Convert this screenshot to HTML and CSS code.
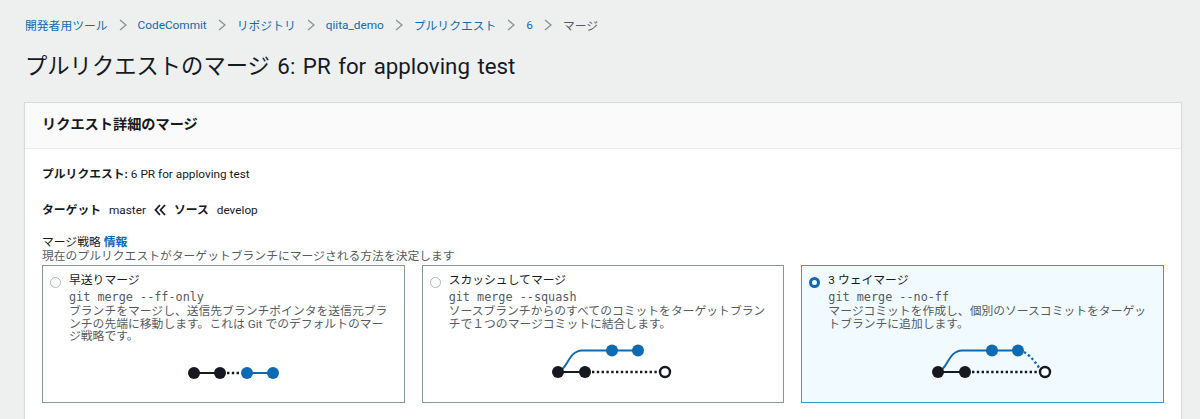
FILE: index.html
```html
<!DOCTYPE html>
<html lang="ja">
<head>
  <meta charset="UTF-8" />
  <meta name="viewport" content="width=device-width, initial-scale=1.0"/>
  <title>プルリクエストのマージ</title>
  <link rel="stylesheet" href="styles.css">
</head>
<body>

<nav class="breadcrumb">
  <a href="#">開発者用ツール</a>
  <svg class="chevron" viewBox="0 0 8 12"><path d="M1 1l6 5-6 5"/></svg>
  <a href="#">CodeCommit</a>
  <svg class="chevron" viewBox="0 0 8 12"><path d="M1 1l6 5-6 5"/></svg>
  <a href="#">リポジトリ</a>
  <svg class="chevron" viewBox="0 0 8 12"><path d="M1 1l6 5-6 5"/></svg>
  <a href="#">qiita_demo</a>
  <svg class="chevron" viewBox="0 0 8 12"><path d="M1 1l6 5-6 5"/></svg>
  <a href="#">プルリクエスト</a>
  <svg class="chevron" viewBox="0 0 8 12"><path d="M1 1l6 5-6 5"/></svg>
  <a href="#">6</a>
  <svg class="chevron" viewBox="0 0 8 12"><path d="M1 1l6 5-6 5"/></svg>
  <span>マージ</span>
</nav>

<h1 class="page-title">プルリクエストのマージ 6: PR for apploving test</h1>

<section class="panel">
  <h2 class="panel-header">リクエスト詳細のマージ</h2>
  <div class="panel-body">
    <p class="pr-line"><strong>プルリクエスト:</strong> 6 PR for apploving test</p>

    <p class="branch-line">
      <strong>ターゲット</strong>
      <span>master</span>
      <svg class="arrows" viewBox="0 0 12 12"><path d="M6 1L1.500 6 6 11M11 1L6.500 6 11 11"/></svg>
      <strong>ソース</strong>
      <span>develop</span>
    </p>

    <div class="strategy-label">マージ戦略 <a href="#">情報</a></div>
    <div class="strategy-desc">現在のプルリクエストがターゲットブランチにマージされる方法を決定します</div>

    <div class="cards">
      <div class="card">
        <span class="radio"></span>
        <div class="card-content">
          <div class="card-title">早送りマージ</div>
          <code>git merge --ff-only</code>
          <p>ブランチをマージし、送信先ブランチポインタを送信元ブランチの先端に移動します。これは Git でのデフォルトのマージ戦略です。</p>
          <svg class="graph" viewBox="0 0 130 48">
            <path class="line-black" d="M26 23H52"/>
            <path class="dots-black" d="M59 23H73"/>
            <path class="line-blue" d="M79 23H105"/>
            <circle class="node-black" cx="26" cy="23" r="6"/>
            <circle class="node-black" cx="52" cy="23" r="6"/>
            <circle class="node-blue" cx="79" cy="23" r="6"/>
            <circle class="node-blue" cx="105" cy="23" r="6"/>
          </svg>
        </div>
      </div>

      <div class="card">
        <span class="radio"></span>
        <div class="card-content">
          <div class="card-title">スカッシュしてマージ</div>
          <code>git merge --squash</code>
          <p>ソースブランチからのすべてのコミットをターゲットブランチで１つのマージコミットに結合します。</p>
          <svg class="graph" viewBox="0 0 130 48">
            <path class="line-blue" d="M11 34C21 31 21 13 35 12.500H91"/>
            <path class="line-black" d="M11 34H38"/>
            <path class="dots-black" d="M45 34H111"/>
            <circle class="node-black" cx="11" cy="34" r="6"/>
            <circle class="node-black" cx="38" cy="34" r="6"/>
            <circle class="node-blue" cx="65" cy="12.500" r="6"/>
            <circle class="node-blue" cx="91" cy="12.500" r="6"/>
            <circle class="node-open" cx="118" cy="34" r="5"/>
          </svg>
        </div>
      </div>

      <div class="card card-selected">
        <span class="radio radio-on"></span>
        <div class="card-content">
          <div class="card-title">3 ウェイマージ</div>
          <code>git merge --no-ff</code>
          <p>マージコミットを作成し、個別のソースコミットをターゲットブランチに追加します。</p>
          <svg class="graph" viewBox="0 0 130 48">
            <path class="line-blue" d="M11 34C21 31 21 13 35 12.500H91"/>
            <path class="line-black" d="M11 34H38"/>
            <path class="dots-black" d="M45 34H111"/>
            <path class="dots-blue" d="M97 14C104 18 109 25 113 31"/>
            <circle class="node-black" cx="11" cy="34" r="6"/>
            <circle class="node-black" cx="38" cy="34" r="6"/>
            <circle class="node-blue" cx="65" cy="12.500" r="6"/>
            <circle class="node-blue" cx="91" cy="12.500" r="6"/>
            <circle class="node-open" cx="118" cy="34" r="5"/>
          </svg>
        </div>
      </div>
    </div>
  </div>
</section>

</body>
</html>
```

FILE: styles.css
```css
* {
  box-sizing: border-box;
}

html, body {
  height: 100%;
}

body {
  margin: 0;
  padding: 0 19px 0 25px;
  overflow: hidden;
  background: #eef0f0;
  color: #16191f;
  font-family: Roboto, "Noto Sans CJK JP", sans-serif;
  font-size: 11.800px;
}

a {
  color: #0f6ab4;
  text-decoration: none;
}

.breadcrumb {
  display: flex;
  align-items: center;
  gap: 11px;
  padding-top: 16px;
  height: 33px;
  color: #545b64;
}

.chevron {
  width: 8px;
  height: 12px;
  fill: none;
  stroke: #879596;
  stroke-width: 1.4;
}

.page-title {
  margin: 15px 0 0;
  font-size: 22.300px;
  font-weight: 400;
  word-spacing: 2px;
  line-height: 36px;
}

.panel {
  margin-top: 19px;
  height: 320px;
  background: #fff;
  box-shadow: 0 0 0 1px #d5dbdb, 0 1px 2px rgba(0, 28, 36, 0.2);
}

.panel-header {
  margin: 0;
  padding: 0 17px;
  height: 46px;
  line-height: 43px;
  font-size: 14.200px;
  font-weight: 700;
  background: #fafafa;
  border-bottom: 1px solid #eaeded;
}

.panel-body {
  padding: 16px 17px 0;
}

.pr-line,
.branch-line {
  margin: 0;
  line-height: 18px;
}

.branch-line {
  display: flex;
  align-items: center;
  margin-top: 18px;
  gap: 8px;
}

.arrows {
  width: 12px;
  height: 12px;
  fill: none;
  stroke: #16191f;
  stroke-width: 1.8;
}

.strategy-label {
  margin-top: 16px;
  line-height: 14px;
}

.strategy-label a {
  font-weight: 700;
}

.strategy-desc {
  line-height: 14px;
  color: #545b64;
}

.cards {
  display: grid;
  grid-template-columns: repeat(3, 1fr);
  gap: 17px;
  margin-top: 2px;
}

.card {
  display: flex;
  align-items: flex-start;
  gap: 8px;
  padding: 7px 7px 4px 7px;
  background: #fff;
  border: 1px solid #879596;
}

.card-selected {
  background: #f1faff;
  border-color: #2f9fd0;
}

.radio {
  flex: none;
  width: 11px;
  height: 11px;
  margin-top: 3.500px;
  background: #fff;
  border: 1px solid #aab7b8;
  border-radius: 50%;
}

.radio-on {
  border: 3.500px solid #0f6ab4;
}

.card-content {
  flex: 1;
  min-width: 0;
}

.card-title {
  line-height: 15px;
}

.card-content code {
  display: block;
  margin-top: 2px;
  font-family: "DejaVu Sans Mono", monospace;
  font-size: 11.800px;
  line-height: 14px;
  color: #545b64;
}

.card-content p {
  margin: 1px 3px 0 0;
  line-height: 12.500px;
  color: #545b64;
}

.graph {
  display: block;
  width: 130px;
  height: 48px;
  margin: 7.500px auto 0;
  fill: none;
}

.line-black {
  stroke: #16191f;
  stroke-width: 2;
}

.line-blue {
  stroke: #0f6ab4;
  stroke-width: 2;
}

.dots-black {
  stroke: #16191f;
  stroke-width: 2.400;
  stroke-dasharray: 2.400 2.400;
}

.dots-blue {
  stroke: #0f6ab4;
  stroke-width: 2.400;
  stroke-dasharray: 2.400 2.400;
}

.node-black {
  fill: #16191f;
}

.node-blue {
  fill: #0f6ab4;
}

.node-open {
  fill: #fff;
  stroke: #16191f;
  stroke-width: 2.400;
}
```
